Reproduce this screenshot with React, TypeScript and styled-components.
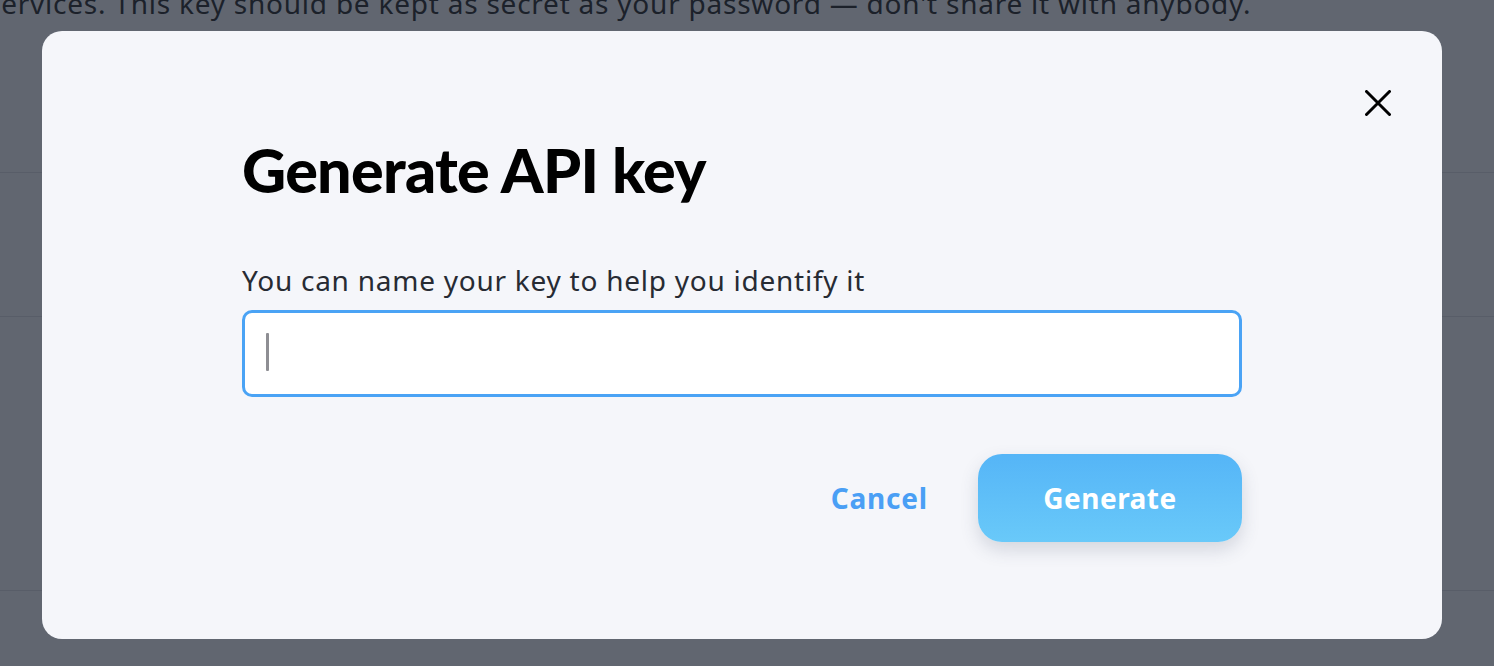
import React, { useState } from 'react';
import styled, { createGlobalStyle } from 'styled-components';

const GlobalStyle = createGlobalStyle`
  html, body {
    margin: 0;
    padding: 0;
    overflow: hidden;
    background: #f5f6fa;
  }
  body {
    font-family: "Noto Sans", Lato, sans-serif;
  }
`;

const Page = styled.div`
  width: 1494px;
  height: 666px;
  overflow: hidden;
`;

const Intro = styled.p`
  margin: -12px 0 0 -13px;
  font-size: 28px;
  line-height: 30px;
  letter-spacing: 0.77px;
  color: #333;
  white-space: nowrap;
`;

const Row = styled.div<{ $h: number }>`
  height: ${({ $h }) => $h}px;
  box-sizing: border-box;
  border-bottom: 1px solid #dcdde2;
`;

const Overlay = styled.div`
  position: fixed;
  inset: 0;
  background: rgba(17, 24, 39, 0.65);
  display: flex;
  align-items: center;
  padding-left: 42px;
`;

const Modal = styled.div`
  position: relative;
  box-sizing: border-box;
  width: 1400px;
  height: 608px;
  margin-top: 3px;
  background: #f5f6fa;
  border-radius: 20px;
  padding: 99px 200px 0;
  display: flex;
  flex-direction: column;
`;

const CloseButton = styled.button`
  position: absolute;
  top: 59px;
  right: 51px;
  width: 26px;
  height: 26px;
  padding: 0;
  border: none;
  background: none;
  cursor: pointer;
  display: flex;
  align-items: center;
  justify-content: center;
`;

const Title = styled.h2`
  margin: 0;
  font-family: Lato, "Noto Sans", sans-serif;
  font-weight: 900;
  font-size: 61px;
  line-height: 80px;
  color: #000;
  letter-spacing: -0.7px;
`;

const Label = styled.label`
  margin-top: 54px;
  font-size: 28px;
  line-height: 33px;
  color: #272b33;
  letter-spacing: 0.75px;
`;

const Field = styled.div`
  position: relative;
  margin-top: 13px;
  width: 1000px;
`;

const Input = styled.input`
  display: block;
  box-sizing: border-box;
  width: 1000px;
  height: 87px;
  border: 3px solid #4aa3f5;
  border-radius: 10px;
  background: #fff;
  padding: 0 22px;
  font-size: 26px;
  font-family: "Noto Sans", Lato, sans-serif;
  outline: none;
`;

const Caret = styled.span`
  position: absolute;
  left: 24px;
  top: 23px;
  width: 3px;
  height: 38px;
  background: #8e8e93;
  border-radius: 1px;
`;

const Actions = styled.div`
  margin-top: 57px;
  display: flex;
  justify-content: flex-end;
  align-items: center;
  gap: 50px;
`;

const TextButton = styled.button`
  border: none;
  background: none;
  padding: 0;
  font-family: "Noto Sans", Lato, sans-serif;
  font-weight: 700;
  font-size: 28px;
  letter-spacing: 0.8px;
  color: #4a9ff5;
  cursor: pointer;
`;

const PrimaryButton = styled.button`
  width: 264px;
  height: 88px;
  border: none;
  border-radius: 24px;
  background: linear-gradient(180deg, #55b5f7 0%, #69c9f9 100%);
  box-shadow: 0 8px 18px rgba(60, 70, 100, 0.18);
  font-family: "Noto Sans", Lato, sans-serif;
  font-weight: 700;
  font-size: 28px;
  letter-spacing: 0.5px;
  color: #fff;
  cursor: pointer;
`;

const CloseIcon = () => (
  <svg width="26" height="26" viewBox="0 0 26 26" fill="none">
    <path d="M1.5 1.5L24.5 24.5M24.5 1.5L1.5 24.5" stroke="#000" strokeWidth="3" strokeLinecap="round" />
  </svg>
);

export default function App() {
  const [name, setName] = useState('');
  return (
    <>
      <GlobalStyle />
      <Page>
        <Intro>
          services. This key should be kept as secret as your password — don't share it with anybody.
        </Intro>
        <Row $h={155} />
        <Row $h={144} />
        <Row $h={274} />
      </Page>
      <Overlay>
        <Modal>
          <CloseButton aria-label="Close">
            <CloseIcon />
          </CloseButton>
          <Title>Generate API key</Title>
          <Label htmlFor="key-name">You can name your key to help you identify it</Label>
          <Field>
            <Input id="key-name" value={name} onChange={(e) => setName(e.target.value)} />
            {name === '' && <Caret />}
          </Field>
          <Actions>
            <TextButton>Cancel</TextButton>
            <PrimaryButton>Generate</PrimaryButton>
          </Actions>
        </Modal>
      </Overlay>
    </>
  );
}
